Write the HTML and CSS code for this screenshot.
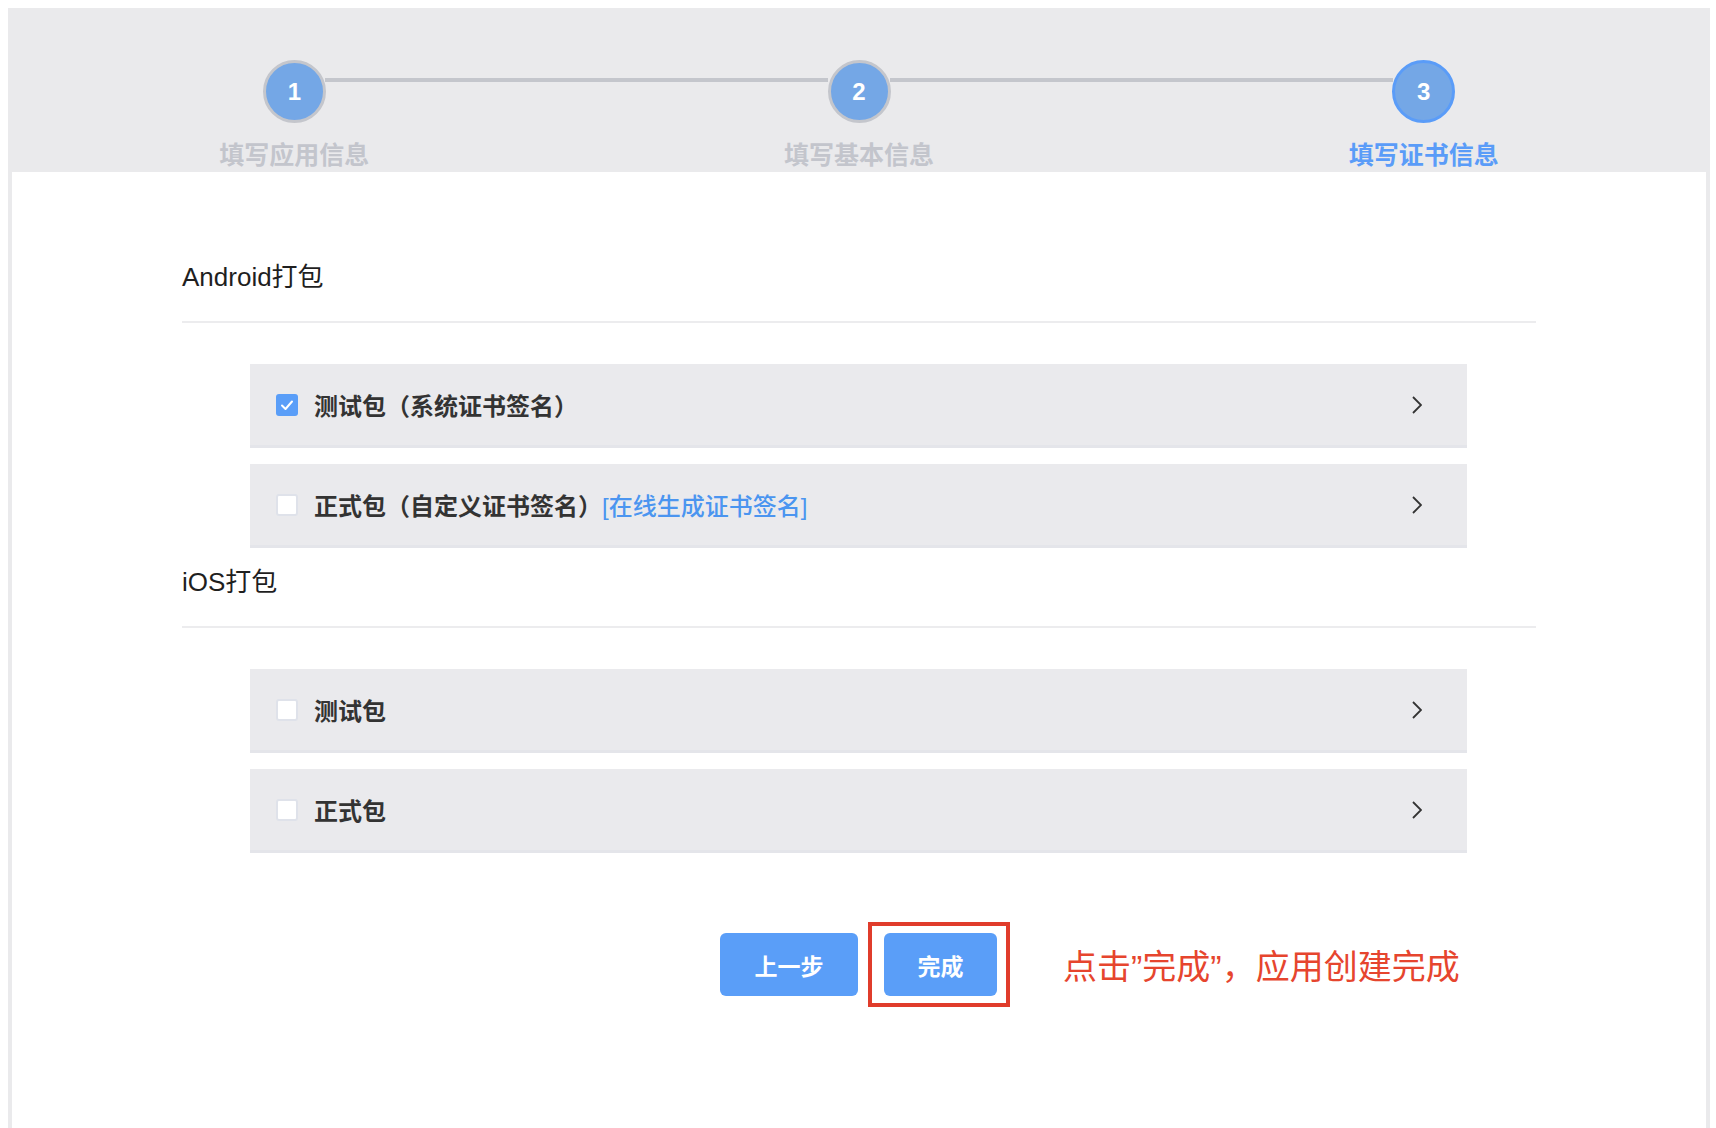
FILE: index.html
```html
<!DOCTYPE html>
<html lang="zh-CN">
<head>
    <meta charset="UTF-8">
    <meta name="viewport" content="width=device-width, initial-scale=1.0">
    <title>创建应用</title>
    <link rel="stylesheet" href="styles.css">
</head>
<body>
    <div class="panel">
        <div class="steps">
            <div class="step done">
                <div class="step-num">1</div>
                <div class="step-label">填写应用信息</div>
            </div>
            <div class="step done">
                <div class="step-num">2</div>
                <div class="step-label">填写基本信息</div>
            </div>
            <div class="step active">
                <div class="step-num">3</div>
                <div class="step-label">填写证书信息</div>
            </div>
        </div>

        <div class="content">
            <div class="section-title">Android打包</div>
            <div class="pack-list">
                <div class="pack-row">
                    <span class="check checked">
                        <svg width="22" height="22" viewBox="0 0 22 22"><polyline points="6,11.5 9.5,15 16,7.5" fill="none" stroke="#fff" stroke-width="2" stroke-linecap="round" stroke-linejoin="round"/></svg>
                    </span>
                    <span class="pack-name">测试包（系统证书签名）</span>
                    <svg class="chevron" width="10" height="18" viewBox="0 0 10 18"><path d="M1 1 L9 9 L1 17" fill="none" stroke="#333" stroke-width="1.8"/></svg>
                </div>
                <div class="pack-row">
                    <span class="check"></span>
                    <span class="pack-name">正式包（自定义证书签名）<a class="pack-link" href="#">[在线生成证书签名]</a></span>
                    <svg class="chevron" width="10" height="18" viewBox="0 0 10 18"><path d="M1 1 L9 9 L1 17" fill="none" stroke="#333" stroke-width="1.8"/></svg>
                </div>
            </div>

            <div class="section-title">iOS打包</div>
            <div class="pack-list">
                <div class="pack-row">
                    <span class="check"></span>
                    <span class="pack-name">测试包</span>
                    <svg class="chevron" width="10" height="18" viewBox="0 0 10 18"><path d="M1 1 L9 9 L1 17" fill="none" stroke="#333" stroke-width="1.8"/></svg>
                </div>
                <div class="pack-row">
                    <span class="check"></span>
                    <span class="pack-name">正式包</span>
                    <svg class="chevron" width="10" height="18" viewBox="0 0 10 18"><path d="M1 1 L9 9 L1 17" fill="none" stroke="#333" stroke-width="1.8"/></svg>
                </div>
            </div>

            <div class="actions">
                <button class="btn btn-prev">上一步</button>
                <span class="mark">
                    <button class="btn btn-done">完成</button>
                </span>
                <span class="tip">点击”完成”，应用创建完成</span>
            </div>
        </div>
    </div>
</body>
</html>
```

FILE: styles.css
```css
body {
    margin: 8px 6px 0 8px;
    font-family: "Liberation Sans", "Noto Sans CJK SC", sans-serif;
    background: #fff;
    color: #222;
}
.panel {
    height: 1120px;
    box-sizing: border-box;
    border-left: 4px solid #eaeaec;
    border-right: 4px solid #eaeaec;
    background: #fff;
}
.steps {
    display: flex;
    height: 164px;
    box-sizing: border-box;
    padding-top: 52px;
    background: #eaeaec;
}
.step {
    position: relative;
    flex: 1;
    display: flex;
    flex-direction: column;
    align-items: center;
}
/* connector to the next step */
.step:not(:last-child)::after {
    content: '';
    position: absolute;
    top: 18px;
    left: calc(50% + 31px);
    width: calc(100% - 62px);
    height: 4px;
    background: #c4c6cc;
}
.step-num {
    width: 57px;
    height: 57px;
    border: 3px solid #c4c6cc;
    border-radius: 50%;
    background: #74a7e6;
    color: #fff;
    font-size: 24px;
    font-weight: bold;
    display: flex;
    align-items: center;
    justify-content: center;
}
.step.active .step-num {
    border-color: #5a9cf8;
}
.step-label {
    margin-top: 17px;
    font-size: 25px;
    line-height: 30px;
    font-weight: bold;
    color: #c3c5cc;
}
.step.active .step-label {
    color: #5a9cf8;
}
.content {
    margin: 0 170px;
    padding-top: 87px;
}
.section-title {
    font-size: 26px;
    line-height: 36px;
    color: #1f1f1f;
    padding-bottom: 26px;
    border-bottom: 2px solid #ececee;
}
.pack-list {
    margin: 41px 69px 0 68px;
}
.pack-row {
    display: flex;
    align-items: center;
    height: 84px;
    box-sizing: border-box;
    padding: 0 45px 0 26px;
    margin-bottom: 16px;
    background: #eaeaed;
    border-bottom: 3px solid #e4e5ea;
}
.check {
    width: 22px;
    height: 22px;
    box-sizing: border-box;
    border: 2px solid #dfe2ea;
    border-radius: 3px;
    background: #fff;
    margin-right: 16px;
    flex-shrink: 0;
}
.check.checked {
    border: none;
    background: #5a9ef8;
}
.check svg {
    display: block;
}
.pack-name {
    flex: 1;
    font-size: 24px;
    font-weight: 600;
    color: #333;
}
.pack-link {
    color: #4b95f0;
    font-weight: 500;
    text-decoration: none;
}
.chevron {
    display: block;
}
.actions {
    display: flex;
    align-items: center;
    margin-top: 69px;
    padding-left: 538px;
}
.btn {
    height: 63px;
    border: none;
    border-radius: 6px;
    background: #5a9ef8;
    color: #fff;
    font-family: inherit;
    font-size: 23px;
    font-weight: bold;
    cursor: pointer;
}
.btn-prev {
    width: 138px;
}
.btn-done {
    width: 113px;
    display: block;
}
.mark {
    margin-left: 10px;
    padding: 7px 9px 7px 12px;
    border: 4px solid #e03c2b;
}
.tip {
    margin-left: 53px;
    font-size: 34px;
    color: #e6452e;
}
```
